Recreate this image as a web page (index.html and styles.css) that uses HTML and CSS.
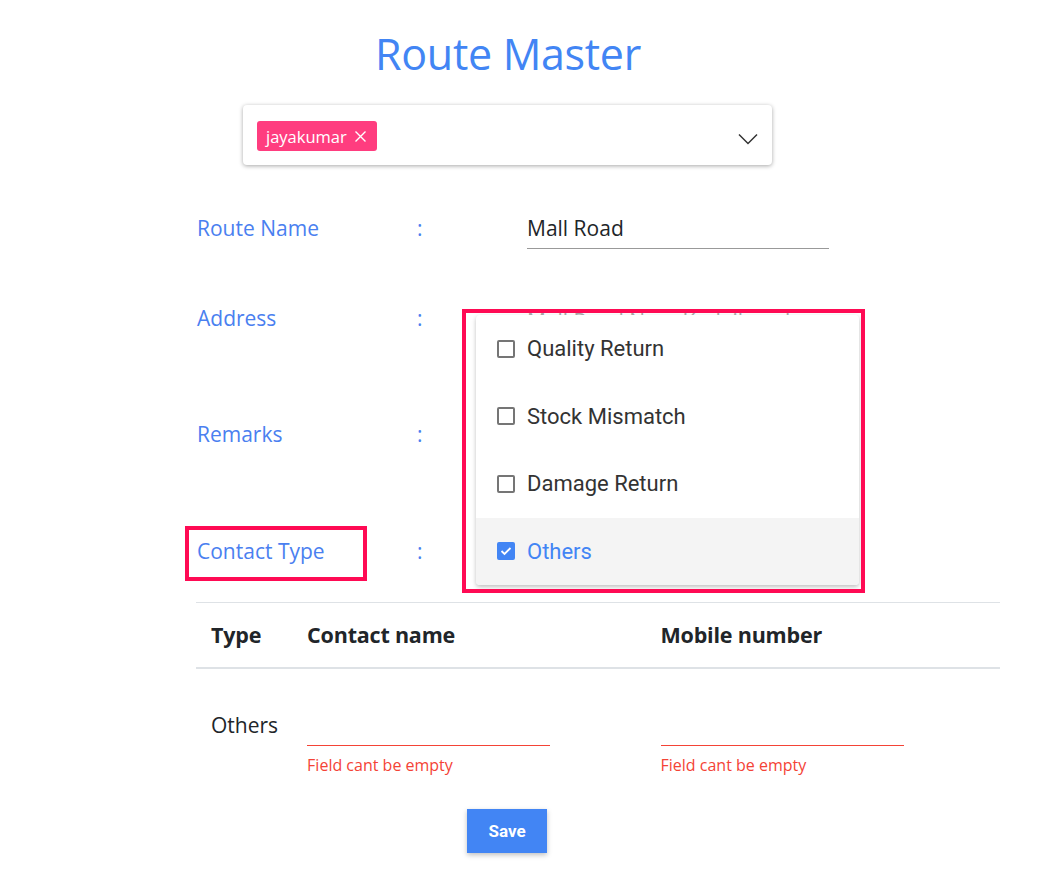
FILE: index.html
```html
<!DOCTYPE html>
<html>
<head>
<meta charset="utf-8">
<link rel="stylesheet" href="styles.css">
</head>
<body>
<div class="page">
  <h1 class="title">Route Master</h1>
  <div class="select">
    <span class="chip">jayakumar
      <svg class="chip-x" width="13" height="13" viewBox="0 0 13 13"><path d="M1.5 1.5L11.5 11.5M11.5 1.5L1.5 11.5" stroke="#fff" stroke-width="1.4" fill="none"/></svg>
    </span>
    <svg class="chev" width="20" height="12" viewBox="0 0 20 12"><path d="M1 1.5L10 10.5L19 1.5" stroke="#333" stroke-width="1.5" fill="none"/></svg>
  </div>

  <div class="form">
    <div class="row r1">
      <div class="label">Route Name</div>
      <div class="colon">:</div>
      <div class="value field">Mall Road</div>
    </div>
    <div class="row r2">
      <div class="label">Address</div>
      <div class="colon">:</div>
      <div class="value plain addr">Mall Road Near Kodaikanal</div>
    </div>
    <div class="row r3">
      <div class="label">Remarks</div>
      <div class="colon">:</div>
      <div class="value plain"></div>
    </div>
    <div class="row r4">
      <div class="label">Contact Type</div>
      <div class="colon">:</div>
      <div class="value plain"></div>
      <div class="mark mark-label"></div>
      <div class="menu">
        <div class="opt"><span class="cb"></span>Quality Return</div>
        <div class="opt"><span class="cb"></span>Stock Mismatch</div>
        <div class="opt"><span class="cb"></span>Damage Return</div>
        <div class="opt active"><span class="cb checked"><svg width="12" height="10" viewBox="0 0 12 10"><path d="M1.5 5L4.5 8L10.5 2" stroke="#fff" stroke-width="1.8" fill="none"/></svg></span>Others</div>
      </div>
      <div class="mark mark-menu"></div>
    </div>
  </div>

  <table class="contacts">
    <thead>
      <tr><th class="c1">Type</th><th class="c2">Contact name</th><th class="c3">Mobile number</th></tr>
    </thead>
    <tbody>
      <tr>
        <td class="type">Others</td>
        <td class="cn"><div class="line"></div><div class="err">Field cant be empty</div></td>
        <td class="mn"><div class="line"></div><div class="err">Field cant be empty</div></td>
      </tr>
    </tbody>
  </table>

  <button class="save">Save</button>
</div>
</body>
</html>
```

FILE: styles.css
```css
* { box-sizing: border-box; }
body {
  margin: 0;
  background: #fff;
  font-family: "Open Sans", "Noto Sans", sans-serif;
  color: #212529;
}
.page {
  width: 1042px;
  height: 870px;
  overflow: hidden;
}
.title {
  margin: 0;
  padding-top: 26px;
  width: 1016px;
  text-align: center;
  font-size: 43px;
  font-weight: 400;
  line-height: 56px;
  color: #4285f4;
  letter-spacing: -0.3px;
}
.select {
  margin: 23px 0 0 243px;
  width: 529px;
  height: 60px;
  background: #fff;
  border-radius: 4px;
  box-shadow: 0 1px 4px rgba(0,0,0,0.35);
  display: flex;
  align-items: center;
  justify-content: space-between;
  padding: 0 14px 0 14px;
}
.chip {
  margin-top: 2px;
  height: 30px;
  background: #ff3d7f;
  border-radius: 3px;
  color: #fff;
  font-family: "Open Sans", sans-serif;
  font-size: 16.5px;
  display: flex;
  align-items: center;
  gap: 7px;
  padding: 0 10px 0 9px;
}
.chip-x { display: block; }
.chev { display: block; margin-top: 8px; }

.form {
  margin: 33px 0 0 196px;
  width: 804px;
}
.row {
  position: relative;
  display: grid;
  grid-template-columns: 221px 110px 302px;
  align-items: center;
  font-size: 21px;
}
.r1 { height: 60px; }
.r2 { height: 120px; }
.r3 { height: 112px; }
.r4 { height: 112px; padding-top: 10px; }
.label {
  color: #4a80f0;
  padding-left: 1px;
}
.colon { color: #4a80f0; }
.value { color: #212529; }
.addr { color: #aaa; padding-top: 5px; }
.field {
  border-bottom: 1px solid #999;
  padding-bottom: 6px;
  margin-top: 6px;
}
.mark {
  position: absolute;
  border: 4px solid #ff0a54;
}
.mark-label {
  left: -11px;
  top: 36px;
  width: 182px;
  height: 55px;
}
.mark-menu {
  left: 266px;
  top: -181px;
  width: 403px;
  height: 284px;
}
.menu {
  position: absolute;
  left: 280px;
  top: -175px;
  width: 383px;
  height: 270px;
  background: #fff;
  border-radius: 4px;
  box-shadow: 0 2px 4px rgba(0,0,0,0.25);
  overflow: hidden;
  font-family: Roboto, sans-serif;
}
.opt {
  height: 67.5px;
  display: flex;
  align-items: center;
  padding-left: 21px;
  font-size: 22px;
  color: #333;
}
.opt.active {
  background: #f4f4f4;
  color: #4285f4;
}
.cb {
  width: 18px;
  height: 18px;
  border: 2px solid #757575;
  border-radius: 2px;
  margin-right: 12px;
  display: flex;
  align-items: center;
  justify-content: center;
}
.cb.checked {
  background: #4285f4;
  border-color: #4285f4;
}
.cb svg { display: block; }

.contacts {
  margin-left: 196px;
  width: 804px;
  border-collapse: collapse;
}
.contacts th {
  text-align: left;
  font-size: 21.5px;
  font-weight: 700;
  height: 65px;
  padding: 0 15px;
  border-top: 1px solid #dee2e6;
  border-bottom: 2px solid #dee2e6;
  color: #212529;
  vertical-align: middle;
  letter-spacing: -0.2px;
}
.c1 { width: 96px; }
.c2 { width: 355px; padding-left: 14px !important; }
.c3 { width: 353px; padding-left: 13px !important; }
.contacts td {
  vertical-align: top;
  padding: 47px 15px 0 15px;
  height: 120px;
}
.contacts td.cn { padding-left: 14px; }
.contacts td.mn { padding-left: 13px; }
.contacts td.type {
  padding-top: 42px;
  font-size: 21px;
  color: #212529;
}
.line {
  width: 243px;
  height: 30px;
  border-bottom: 1px solid #f44336;
}
.err {
  margin-top: 8px;
  font-size: 16px;
  color: #f44336;
}
.save {
  display: block;
  margin: 21px 0 0 467px;
  width: 80px;
  height: 44px;
  border: none;
  background: #4285f4;
  color: #fff;
  font-family: Roboto, sans-serif;
  font-weight: 700;
  font-size: 17px;
  box-shadow: 0 2px 5px rgba(0,0,0,0.25);
}
```
